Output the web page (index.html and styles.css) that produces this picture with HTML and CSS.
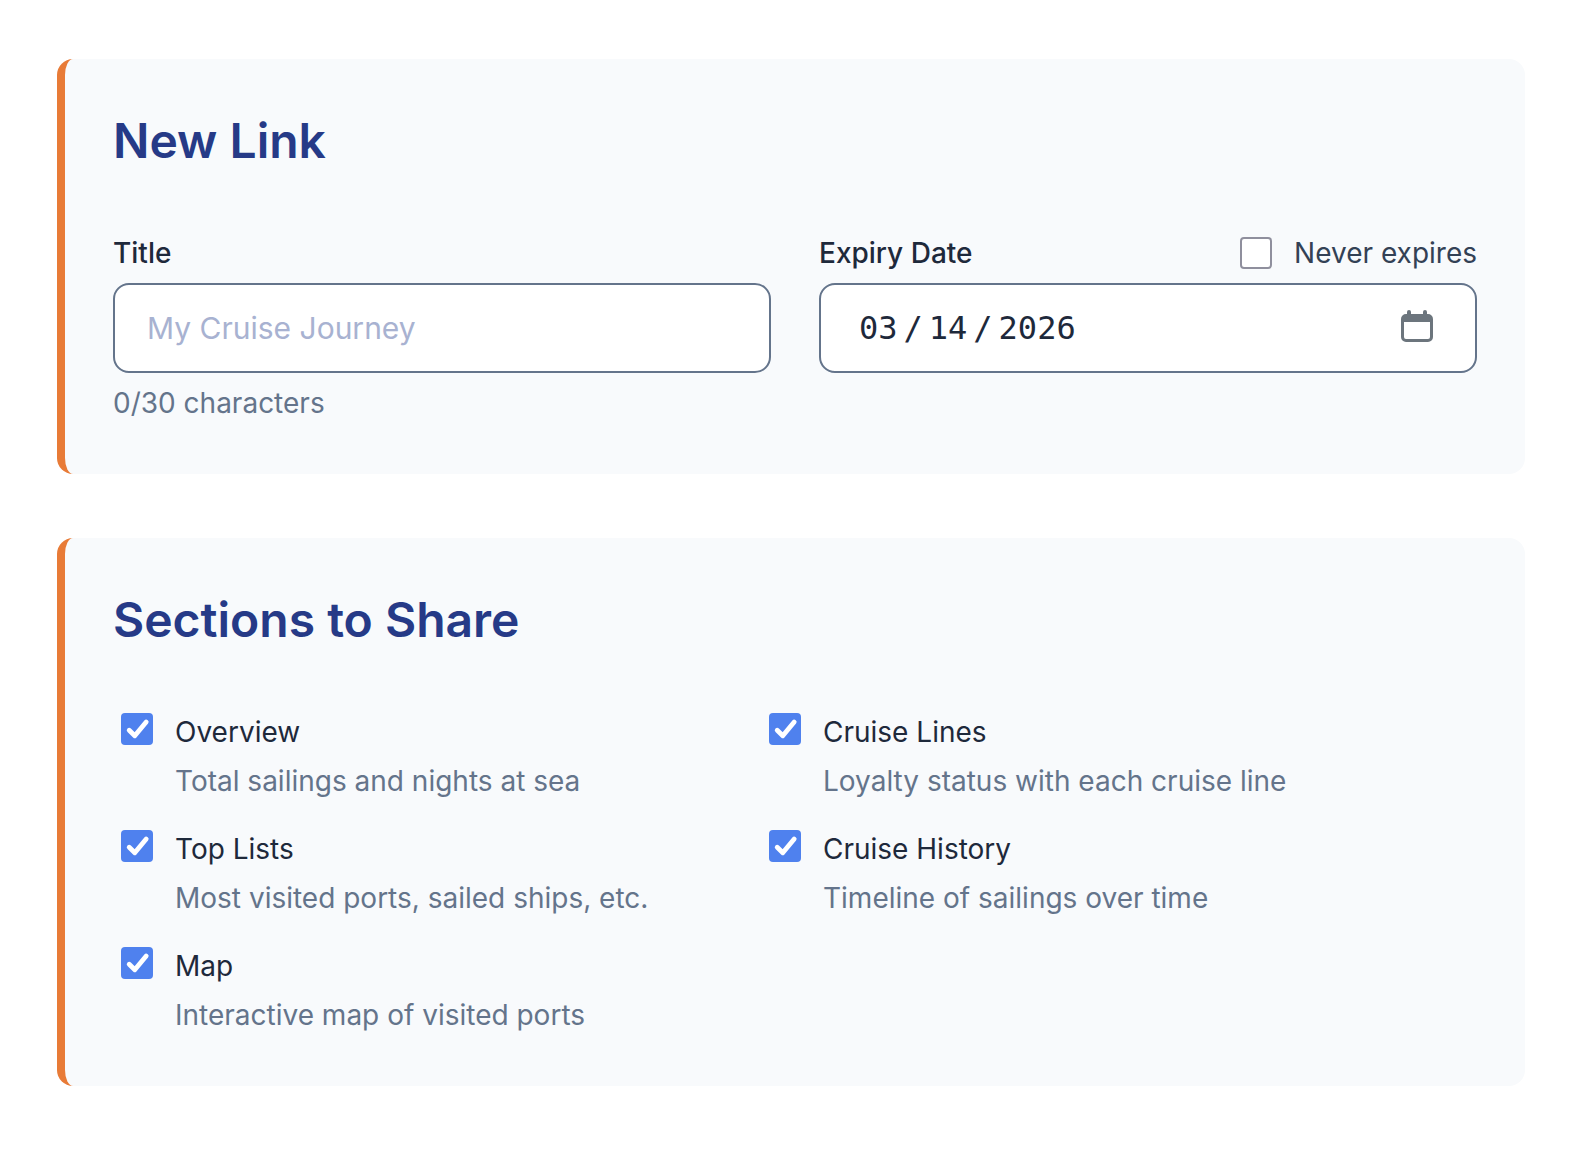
FILE: index.html
```html
<!DOCTYPE html>
<html lang="en">
<head>
    <meta charset="UTF-8">
    <meta name="viewport" content="width=device-width, initial-scale=1.0">
    <title>New Link</title>
    <link rel="stylesheet" href="styles.css">
</head>
<body>
    <form class="share-form">
        <section class="card">
            <h2>New Link</h2>
            <div class="fields">
                <div class="field">
                    <div class="field-header">
                        <label class="field-label" for="title">Title</label>
                    </div>
                    <input class="text-input" type="text" id="title" maxlength="30" placeholder="My Cruise Journey">
                    <p class="hint">0/30 characters</p>
                </div>
                <div class="field">
                    <div class="field-header">
                        <label class="field-label" for="expiry">Expiry Date</label>
                        <label class="never" for="never">
                            <input class="checkbox" type="checkbox" id="never">
                            Never expires
                        </label>
                    </div>
                    <div class="date-wrap">
                        <input class="text-input date-input" type="date" id="expiry" value="2026-03-14">
                        <svg class="calendar-icon" viewBox="0 0 32 32" aria-hidden="true">
                            <path fill="#6c757d" fill-rule="evenodd" d="M6 4V2a2 2 0 0 1 4 0v2h12V2a2 2 0 0 1 4 0v2h1a5 5 0 0 1 5 5v18a5 5 0 0 1-5 5H5a5 5 0 0 1-5-5V9a5 5 0 0 1 5-5zM3 12v15a2 2 0 0 0 2 2h22a2 2 0 0 0 2-2V12z"/>
                        </svg>
                    </div>
                </div>
            </div>
        </section>

        <section class="card">
            <h2>Sections to Share</h2>
            <div class="options">
                <div class="option">
                    <input class="checkbox" type="checkbox" id="overview" checked>
                    <div class="option-text">
                        <label for="overview">Overview</label>
                        <p>Total sailings and nights at sea</p>
                    </div>
                </div>
                <div class="option">
                    <input class="checkbox" type="checkbox" id="cruise-lines" checked>
                    <div class="option-text">
                        <label for="cruise-lines">Cruise Lines</label>
                        <p>Loyalty status with each cruise line</p>
                    </div>
                </div>
                <div class="option">
                    <input class="checkbox" type="checkbox" id="top-lists" checked>
                    <div class="option-text">
                        <label for="top-lists">Top Lists</label>
                        <p>Most visited ports, sailed ships, etc.</p>
                    </div>
                </div>
                <div class="option">
                    <input class="checkbox" type="checkbox" id="history" checked>
                    <div class="option-text">
                        <label for="history">Cruise History</label>
                        <p>Timeline of sailings over time</p>
                    </div>
                </div>
                <div class="option">
                    <input class="checkbox" type="checkbox" id="map" checked>
                    <div class="option-text">
                        <label for="map">Map</label>
                        <p>Interactive map of visited ports</p>
                    </div>
                </div>
            </div>
        </section>
    </form>
</body>
</html>
```
FILE: styles.css
```css
* {
    box-sizing: border-box;
}
body {
    margin: 0;
    background: #fff;
    color: #1e293b;
    font-family: Inter, sans-serif;
    font-size: 28px;
    line-height: 46px;
}
h2, p {
    margin: 0;
}
.share-form {
    display: flex;
    flex-direction: column;
    gap: 64px;
    padding: 59px 59px 59px 57px;
}
.card {
    padding: 48px;
    background: #f8fafc;
    border-left: 8px solid #e87b37;
    border-radius: 16px;
}
.card h2 {
    margin-bottom: 55px;
    color: #263a87;
    font-size: 48px;
    font-weight: 600;
    line-height: 68px;
}

/* New link fields */
.fields {
    display: grid;
    grid-template-columns: 1fr 1fr;
    gap: 48px;
}
.field {
    display: flex;
    flex-direction: column;
    gap: 7px;
}
.field-header {
    display: flex;
    justify-content: space-between;
}
.field-label {
    font-weight: 500;
}
.never {
    display: flex;
    gap: 16px;
    color: #334155;
}
.text-input {
    display: block;
    width: 100%;
    height: 90px;
    padding: 0 32px;
    background: #fff;
    border: 2px solid #64748b;
    border-radius: 16px;
    color: #1e293b;
    font-family: Inter, sans-serif;
    font-size: 30px;
}
.text-input::placeholder {
    color: #a8b2d1;
    opacity: 1;
}
.hint {
    color: #64748b;
}
.date-wrap {
    position: relative;
}
.date-input {
    font-family: "DejaVu Sans Mono", monospace;
    font-size: 32px;
}
.date-input::-webkit-datetime-edit-month-field,
.date-input::-webkit-datetime-edit-day-field,
.date-input::-webkit-datetime-edit-year-field {
    padding: 0 6px;
}
.date-input::-webkit-calendar-picker-indicator {
    opacity: 0;
}
.calendar-icon {
    position: absolute;
    top: 27px;
    right: 44px;
    width: 32px;
    height: 32px;
    pointer-events: none;
}

/* Checkboxes */
.checkbox {
    appearance: none;
    flex: none;
    width: 32px;
    height: 32px;
    margin: 7px 6px 7px 8px;
    background: #fff;
    border: 2px solid #8f8f9d;
    border-radius: 4px;
}
.checkbox:checked {
    background: #4f81ee url("data:image/svg+xml,%3Csvg xmlns='http://www.w3.org/2000/svg' viewBox='0 0 32 32'%3E%3Cpath d='M8.2 17.2l5.6 5.6L25.2 9' fill='none' stroke='%23fff' stroke-width='4.8' stroke-linecap='round' stroke-linejoin='round'/%3E%3C/svg%3E") center / 32px 32px no-repeat;
    border: none;
}

/* Sections list */
.options {
    display: grid;
    grid-template-columns: 1fr 1fr;
    gap: 22px 16px;
    max-width: 1280px;
}
.option {
    display: flex;
    gap: 16px;
}
.option .checkbox {
    margin-top: 4px;
}
.option-text {
    display: flex;
    flex-direction: column;
    gap: 3px;
}
.option-text p {
    color: #64748b;
}
```
